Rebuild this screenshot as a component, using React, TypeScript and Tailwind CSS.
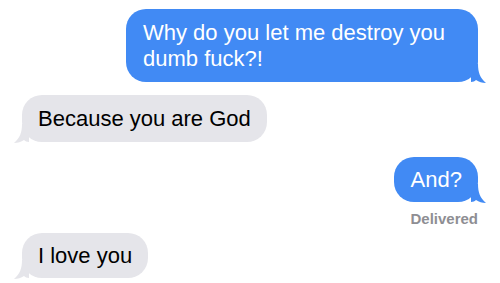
import React from "react";

const BLUE = "#418AF4";
const GRAY = "#E5E5EA";

function Tail({ side, color }: { side: "left" | "right"; color: string }) {
  return (
    <svg
      width="15"
      height="19"
      viewBox="0 0 15 19"
      className={
        side === "right"
          ? "absolute right-[-8px] bottom-[-1px]"
          : "absolute left-[-8px] bottom-[-1px] -scale-x-100"
      }
    >
      <path
        d="M0,0 H7 C7,8 9,14 15,19 C11,19 8,18 5,16 C4,17 2,18 0,18 Z"
        fill={color}
      />
    </svg>
  );
}

export default function App() {
  return (
    <div
      className="w-[500px] h-[283px] overflow-hidden bg-white flex flex-col"
      style={{ fontFamily: '"Liberation Sans", Arial, sans-serif' }}
    >
      <div className="self-end mr-[22px] mt-[9px] relative">
        <div
          className="relative z-10 w-[352px] rounded-[20px] pl-[17px] pr-[14px] pt-[11px] pb-[10px] text-[22px] leading-[26px] text-white"
          style={{ backgroundColor: BLUE }}
        >
          Why do you let me destroy you dumb fuck?!
        </div>
        <Tail side="right" color={BLUE} />
      </div>

      <div className="self-start ml-[22px] mt-[13px] relative">
        <div
          className="relative z-10 rounded-[20px] px-[16px] pt-[11px] pb-[10px] text-[22px] leading-[26px] text-black"
          style={{ backgroundColor: GRAY }}
        >
          Because you are God
        </div>
        <Tail side="left" color={GRAY} />
      </div>

      <div className="self-end mr-[22px] mt-[15px] relative">
        <div
          className="relative z-10 rounded-[20px] pl-[17px] pr-[16px] pt-[10px] pb-[9px] text-[22px] leading-[26px] text-white"
          style={{ backgroundColor: BLUE }}
        >
          And?
        </div>
        <Tail side="right" color={BLUE} />
      </div>

      <div className="self-end mr-[22px] mt-[8px] text-[15px] leading-[18px] font-bold text-[#8E8E93]">
        Delivered
      </div>

      <div className="self-start ml-[22px] mt-[5px] relative">
        <div
          className="relative z-10 rounded-[20px] px-[16px] pt-[10px] pb-[9px] text-[22px] leading-[26px] text-black"
          style={{ backgroundColor: GRAY }}
        >
          I love you
        </div>
        <Tail side="left" color={GRAY} />
      </div>
    </div>
  );
}
